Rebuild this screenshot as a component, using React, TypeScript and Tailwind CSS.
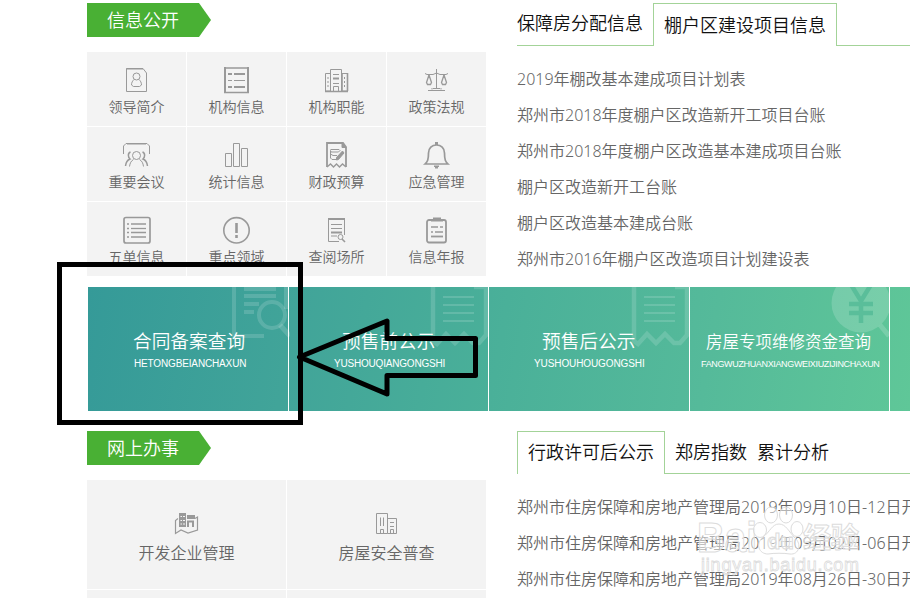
import type { ReactNode } from "react";

// 29x30 line icons, drawn in the gray of the grid
const Icon = ({ children }: { children: ReactNode }) => (
  <svg width="29" height="30" viewBox="0 0 29 30" fill="none" stroke="#999" strokeWidth="1" className="shrink-0">
    {children}
  </svg>
);

const infoItems: { label: string; icon: ReactNode }[] = [
  {
    label: "领导简介",
    icon: (
      <>
        <path d="M4.5 26.5V3.5H21L24.5 8V26.5Z" />
        <path d="M4 4H21" />
        <circle cx="14.5" cy="11.5" r="3.5" />
        <path d="M12 14.5C10.5 16 9.5 17.5 9.5 20L11.5 21.5H17.5L19.5 20C19.5 17.5 18.5 16 17 14.5" />
      </>
    ),
  },
  {
    label: "机构信息",
    icon: (
      <>
        <path d="M2 3H27M2 27.5H27" strokeWidth="1.6" />
        <path d="M3 2V28M26 2V28" strokeWidth="2" />
        <path d="M6 9H10M12 9H23M6 22H10M12 22H23" strokeWidth="2" />
        <path d="M6 15.5H10M12 15.5H23" />
      </>
    ),
  },
  {
    label: "机构职能",
    icon: (
      <>
        <path d="M8.5 8.5H3.5V26H8.5M19.5 8.5H25.5V26H20" />
        <path d="M8.5 26V4.5H19.5V26" />
        <path d="M20 8V26M25.5 8V26M3 26.5H26" strokeWidth="1.6" />
        <path d="M11 9.5H17M11 18.5H17M6 12V14M6 16V18M6 20V22M22.5 12V14M22.5 16V18M22.5 20V22" />
        <path d="M11 13.5H17" strokeWidth="2" />
        <path d="M11.5 26V21.5H16.5V26" />
      </>
    ),
  },
  {
    label: "政策法规",
    icon: (
      <>
        <path d="M14.5 4V23M11 23.5H18M10 23V24.5M19 23V24.5M6 25.5H23" />
        <path d="M3 8.5L5 9.5H11L14.5 8L18 9.5H24L26 8.5" />
        <path d="M7 10L4.5 17.5L5.5 19.5H8.5L9.5 17.5L7 10M22 10L19.5 17.5L20.5 19.5H23.5L24.5 17.5L22 10" strokeWidth="1.3" />
      </>
    ),
  },
  {
    label: "重要会议",
    icon: (
      <>
        <path d="M1.5 14V6L4 3.5H25L27.5 6V14" />
        <path d="M5 4H24" />
        <circle cx="14.5" cy="15.5" r="4" />
        <path d="M8.5 12C5.5 13 6 17.5 8 19C5.5 20 4 22 3.5 26M20.5 12C23.5 13 23 17.5 21 19C23.5 20 25 22 25.5 26" strokeWidth="1.5" />
        <path d="M11.5 19.5C9 21 8 23 7.5 26.5M17.5 19.5C20 21 21 23 21.5 26.5" />
      </>
    ),
  },
  {
    label: "统计信息",
    icon: <path d="M3.5 13.5H9.5V26.5H3.5ZM11.5 3.5H17.5V26.5H11.5ZM19.5 8.5H25.5V26.5H19.5Z" />,
  },
  {
    label: "财政预算",
    icon: (
      <>
        <path d="M5 27V3H21L24 7V27" strokeWidth="1.8" />
        <path d="M20 3V7.5H24Z" fill="#999" />
        <path d="M5 27L8.5 24L11.5 27L14.5 24L17.5 27L20.5 24L24 27" strokeWidth="1.4" />
        <path d="M8.5 9.5H17L18 10.5L16.5 12H9L8.5 10.5V18L10 19.5H14M8.5 14L11 15.5H15" />
        <path d="M20.5 11L14.5 17.5V20L16.5 19.5L22 13Z" fill="#999" />
      </>
    ),
  },
  {
    label: "应急管理",
    icon: (
      <>
        <path d="M3 24C5.5 21.5 6.5 20 6.5 13C6.5 8 10 5 14.5 5C19 5 22.5 8 22.5 13C22.5 20 23.5 21.5 26 24Z" strokeWidth="1.7" />
        <path d="M13 2H16V5H13ZM12 25.5H17V27H16V28.5H13V27H12Z" fill="#999" stroke="none" />
      </>
    ),
  },
  {
    label: "五单信息",
    icon: (
      <>
        <rect x="2" y="2.5" width="26" height="25.5" rx="2" strokeWidth="1.7" />
        <path d="M5 9H7M5 13.5H7M5 17.5H7M5 22H7M9 9H24M9 17.5H24M9 22H24" strokeWidth="1.7" />
        <path d="M9 13.5H24" strokeWidth="1.3" />
      </>
    ),
  },
  {
    label: "重点领域",
    icon: (
      <>
        <circle cx="14.5" cy="15.3" r="12.7" strokeWidth="1.6" />
        <path d="M14.5 8V18M14.5 20V23" strokeWidth="2.6" />
      </>
    ),
  },
  {
    label: "查阅场所",
    icon: (
      <>
        <path d="M22.5 20V4M17 26.5H6.5V4" />
        <path d="M6 4H23M9 17.5H20" strokeWidth="1.8" />
        <path d="M9 9.5H20M9 13.5H20M9 21H15" />
        <circle cx="18.5" cy="22" r="2.5" />
        <path d="M20 24L23 27" strokeWidth="1.6" />
      </>
    ),
  },
  {
    label: "信息年报",
    icon: (
      <>
        <rect x="5" y="5" width="19" height="22.5" rx="2" strokeWidth="1.8" />
        <path d="M11 2.5H19V4H21V6.5H9V4H11Z" fill="#999" stroke="none" />
        <path d="M9 12H16M18 12H21M9 17H11M13 17H21" strokeWidth="1.5" />
        <path d="M9 21.5H21" strokeWidth="1.8" />
      </>
    ),
  },
];

const workItems: { label: string; icon: ReactNode }[] = [
  {
    label: "开发企业管理",
    icon: (
      <>
        <path d="M7 4H14V18H7Z" fill="#999" stroke="none" />
        <path d="M15 6H23V10H15ZM15 11.5H22V18H20V13.5H17V18H15Z" fill="#999" stroke="none" />
        <path d="M8.5 7.5H13M8.5 11.5H13M8.5 15H13" stroke="#f3f3f3" />
        <path d="M10.5 4V18" stroke="#999" />
        <path d="M6 9.5L3.5 11.5V24.5L9 21L16 24L25.5 21V8L23 9.5" strokeWidth="1.2" />
      </>
    ),
  },
  {
    label: "房屋安全普查",
    icon: (
      <>
        <path d="M4.5 4.5H15.5V24.5H4.5ZM15.5 9.5H24.5V24.5H15.5" />
        <path d="M8.5 8.5V17M11.5 8.5V17M18 13.5H22M18 17.5H22M8.5 24.5V20.5H11.5V24.5M18.5 24.5V20.5H21.5V24.5" />
      </>
    ),
  },
];

const projectList = [
  "2019年棚改基本建成项目计划表",
  "郑州市2018年度棚户区改造新开工项目台账",
  "郑州市2018年度棚户区改造基本建成项目台账",
  "棚户区改造新开工台账",
  "棚户区改造基本建成台账",
  "郑州市2016年棚户区改造项目计划建设表",
];

const noticeList = [
  "郑州市住房保障和房地产管理局2019年09月10日-12日开",
  "郑州市住房保障和房地产管理局2019年09月02日-06日开",
  "郑州市住房保障和房地产管理局2019年08月26日-30日开",
];

const Receipt = () => (
  <svg width="60" height="62" viewBox="0 0 60 62" fill="none" stroke="#fff" strokeOpacity="0.15" className="absolute top-0 right-0">
    <path d="M5 0V54L9 57L18 47L27 56L36 47L45 56L51 56L58 48V0M46 0H58" strokeWidth="4.5" />
    <path d="M15 10H46M15 18H46M15 26H46M15 34H46" strokeWidth="2" />
  </svg>
);

const Tag = ({ text }: { text: string }) => (
  <div className="w-[124px] h-[34px] bg-[#49b034] text-white text-[18px] font-light pl-[20px] leading-[34px] [clip-path:polygon(0_0,112px_0,124px_17px,112px_34px,0_34px)]">
    {text}
  </div>
);

const NewsList = ({ items }: { items: string[] }) => (
  <ul className="pt-[15px] text-[16px] text-[#666] whitespace-nowrap">
    {items.map((item) => (
      <li key={item} className="h-9 leading-9">
        {item}
      </li>
    ))}
  </ul>
);

function App() {
  return (
    <div className="relative w-[910px] h-[598px] overflow-hidden bg-white font-[350] font-['Noto_Sans','Noto_Sans_CJK_SC_DemiLight','Noto_Sans_CJK_SC',sans-serif]">
      {/* TOP */}
      <div className="flex h-[287px] pt-[3px] pl-[87px]">
        <div className="w-[399px] shrink-0">
          <Tag text="信息公开" />
          <div className="mt-[15px] grid grid-cols-4 gap-px">
            {infoItems.map((item) => (
              <div key={item.label} className="h-[74px] bg-[#f3f3f3] flex flex-col items-center pt-[13px]">
                <Icon>{item.icon}</Icon>
                <span className="mt-[2px] text-[14px] leading-5 text-[#666]">{item.label}</span>
              </div>
            ))}
          </div>
        </div>

        <div className="ml-[31px] flex-1 min-w-0">
          <div className="flex h-[43px] text-[18px] font-light text-[#111] whitespace-nowrap">
            <div className="w-[136px] border-b border-[#a3d398] leading-[41px]">保障房分配信息</div>
            <div className="w-[184px] border border-b-0 border-[#a3d398] pl-[10px] leading-[42px]">棚户区建设项目信息</div>
            <div className="flex-1 border-b border-[#a3d398]"></div>
          </div>
          <NewsList items={projectList} />
        </div>
      </div>

      {/* BANNER */}
      <div className="ml-[88px] h-[124px] flex text-white whitespace-nowrap bg-[linear-gradient(100deg,#359a98_0%,#41a499_25%,#4ab099_50%,#55ba9a_75%,#5fc798_100%)]">
        <div className="relative w-[201px] border-r border-white pt-[40px] pl-[45px]">
          <svg width="60" height="55" viewBox="0 0 60 55" fill="none" stroke="#fff" strokeOpacity="0.15" className="absolute top-0 right-[-2px]">
            <path d="M4 0V49H34M56 0V22" strokeWidth="4" />
            <path d="M14 2H46M14 9H46M14 17H29M14 25H24" strokeWidth="4" />
            <circle cx="42" cy="28" r="13" strokeWidth="4" />
            <path d="M50 38L60 49" strokeWidth="5" />
          </svg>
          <div className="text-[18.7px] leading-[28px]">合同备案查询</div>
          <div className="font-['Liberation_Sans',sans-serif] text-[10px] leading-[17px] tracking-[-0.15px] pl-px">HETONGBEIANCHAXUN</div>
        </div>
        <div className="relative w-[200px] border-r border-white pt-[40px] pl-[45px]">
          <Receipt />
          <div className="text-[18.7px] leading-[28px] pl-[8px]">预售前公示</div>
          <div className="font-['Liberation_Sans',sans-serif] text-[10px] leading-[17px] tracking-[-0.2px]">YUSHOUQIANGONGSHI</div>
        </div>
        <div className="relative w-[201px] border-r border-white pt-[40px] pl-[45px]">
          <Receipt />
          <div className="text-[18.7px] leading-[28px] pl-[8px]">预售后公示</div>
          <div className="font-['Liberation_Sans',sans-serif] text-[10px] leading-[17px] tracking-[-0.1px]">YUSHOUHOUGONGSHI</div>
        </div>
        <div className="relative w-[200px] border-r border-white pt-[41px] pl-[11px] overflow-hidden">
          <svg width="60" height="60" viewBox="0 0 60 60" className="absolute top-0 right-0">
            <circle cx="32" cy="16" r="29.5" fill="#fff" fillOpacity="0.17" />
            <path d="M51 38L60 49" stroke="#fff" strokeOpacity="0.17" strokeWidth="5" />
            <path d="M21 -4L32 14L43 -4M32 13V36M20 17H44M20 26H44" fill="none" stroke="#5abe9a" strokeWidth="4.5" />
          </svg>
          <div className="text-[16.5px] leading-[27px] pl-[5px]">房屋专项维修资金查询</div>
          <div className="font-['Liberation_Sans',sans-serif] text-[9px] leading-[18px] tracking-[-0.35px]">FANGWUZHUANXIANGWEIXIUZIJINCHAXUN</div>
        </div>
      </div>

      {/* BOTTOM */}
      <div className="flex pt-[20px] pl-[87px]">
        <div className="w-[399px] shrink-0">
          <Tag text="网上办事" />
          <div className="mt-[15px] grid grid-cols-2 gap-px">
            {workItems.map((item) => (
              <div key={item.label} className="h-[109px] bg-[#f3f3f3] flex flex-col items-center pt-[29px]">
                <Icon>{item.icon}</Icon>
                <span className="mt-[2px] text-[16px] leading-6 text-[#666]">{item.label}</span>
              </div>
            ))}
            <div className="h-[109px] bg-[#f3f3f3]"></div>
            <div className="h-[109px] bg-[#f3f3f3]"></div>
          </div>
        </div>

        <div className="ml-[31px] flex-1 min-w-0">
          <div className="flex h-[43px] text-[18px] font-light text-[#111] whitespace-nowrap">
            <div className="w-[148px] border border-b-0 border-[#a3d398] pl-[10px] leading-[41px]">行政许可后公示</div>
            <div className="flex-1 border-b border-[#a3d398] flex gap-[10px] pl-[10px] leading-[42px]">
              <span>郑房指数</span>
              <span>累计分析</span>
            </div>
          </div>
          <NewsList items={noticeList} />
        </div>
      </div>

      {/* WATERMARK */}
      <svg width="176" height="90" viewBox="0 0 176 90" className="absolute left-[692px] top-[495px]" fill="#fff" fillOpacity="0.5" stroke="#dcdcdc" strokeWidth="1">
        <text x="5" y="57" fontSize="42" fontWeight="700" fontFamily="Liberation Sans, sans-serif" textLength="60" lengthAdjust="spacingAndGlyphs">Bai</text>
        <ellipse cx="68" cy="35" rx="6.5" ry="7.5" />
        <ellipse cx="79" cy="20" rx="6.5" ry="8" />
        <ellipse cx="94" cy="20" rx="6.5" ry="8" />
        <ellipse cx="105" cy="34" rx="6" ry="7.5" />
        <path d="M87 29C80 29 78 37 71 42C63 49 67 59 76 59C82 58 92 58 98 59C107 60 110 49 103 43C97 37 94 29 87 29Z" />
        <text x="75" y="54" fontSize="22" fontWeight="700" fontFamily="Liberation Sans, sans-serif">du</text>
        <text x="111" y="53" fontSize="28" fontWeight="700" fontFamily="Noto Sans CJK SC, sans-serif">经验</text>
        <text x="9" y="76" fontSize="18" strokeWidth="0.8" fontFamily="Liberation Sans, sans-serif" textLength="158">jingyan.baidu.com</text>
      </svg>

      {/* HIGHLIGHT BOX + ARROW */}
      <div className="absolute left-[57px] top-[262px] w-[246px] h-[163px] border-[5px] border-black"></div>
      <svg width="190" height="90" viewBox="0 0 190 90" className="absolute left-[295px] top-[312px]" fill="none" stroke="#000" strokeWidth="5" strokeLinejoin="round">
        <path d="M4.5 45L92 9V26.5H180.5V63.5H92V82Z" />
      </svg>
    </div>
  );
}

export default App;
